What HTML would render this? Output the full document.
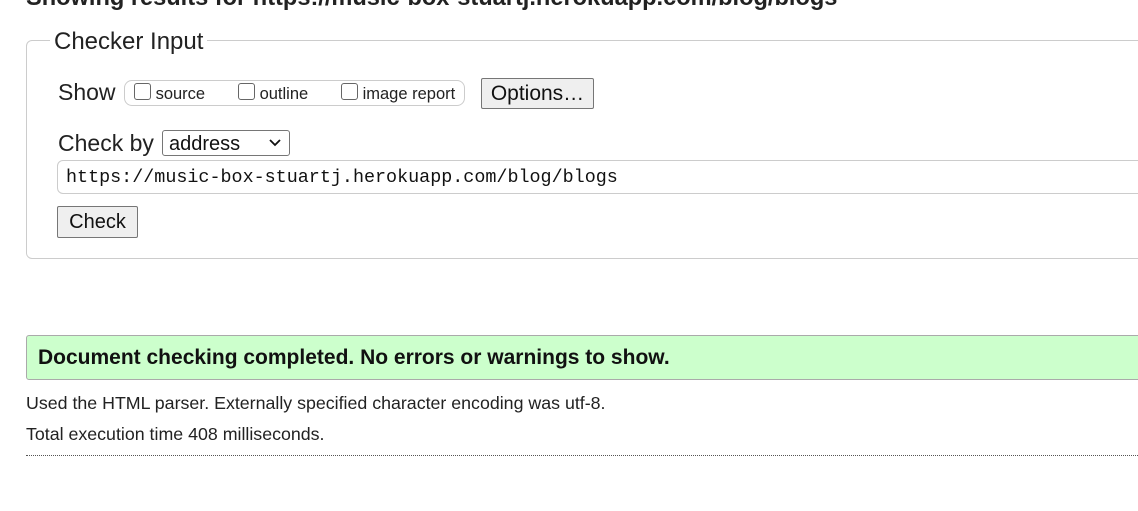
<!DOCTYPE html>
<html><head><style>
body{margin:0;width:1138px;height:511px;overflow:hidden;background:#fff;font-family:"Liberation Sans",Arial,sans-serif;color:#222;position:relative}
.a{position:absolute;white-space:nowrap}
.cb{display:inline-block;width:15px;height:15px;border:1px solid #666;border-radius:3px;vertical-align:-1px;background:#fff}
.btn{position:absolute;background:#efefef;border:1px solid #767676;border-radius:2px;box-sizing:border-box;font-size:20px;color:#111;text-align:center}
</style></head><body>
<div class="a" style="left:26px;top:-15px;font-size:23.6px;font-weight:bold;color:#222">Showing results for https://music-box-stuartj.herokuapp.com/blog/blogs</div>
<div class="a" style="left:26px;top:40px;width:1130px;height:219px;border:1px solid #ccc;border-radius:6px;box-sizing:border-box"></div>
<div class="a" style="left:50px;top:28px;background:#fff;padding:0 4px;font-size:24px;color:#222">Checker Input</div>
<div class="a" style="left:58px;top:79px;font-size:23px">Show</div>
<div class="a" style="left:124px;top:80px;width:341px;height:26px;border:1px solid #ccc;border-radius:8px;box-sizing:border-box"></div>
<div class="a" style="left:134px;top:83px;font-size:16.5px"><span class="cb"></span> source</div>
<div class="a" style="left:238px;top:83px;font-size:16.5px"><span class="cb"></span> outline</div>
<div class="a" style="left:341px;top:83px;font-size:16.5px"><span class="cb"></span> image report</div>
<div class="btn" style="left:481px;top:78px;width:113px;height:31px;line-height:29px;font-size:21px">Options…</div>
<div class="a" style="left:58px;top:130px;font-size:23px">Check by</div>
<div class="a" style="left:162px;top:130px;width:128px;height:26px;border:1px solid #767676;border-radius:3px;box-sizing:border-box;font-size:20px;line-height:26px;padding-left:6px;color:#111">address<svg style="position:absolute;right:8px;top:8px" width="12" height="8" viewBox="0 0 12 8"><path d="M1 1l5 5 5-5" stroke="#111" stroke-width="1.8" fill="none"/></svg></div>
<div class="a" style="left:57px;top:160px;width:1100px;height:34px;border:1px solid #ccc;border-radius:6px;box-sizing:border-box"></div>
<div class="a" style="left:66px;top:167px;font-family:'Liberation Mono',monospace;font-size:18.4px;color:#111">https://music-box-stuartj.herokuapp.com/blog/blogs</div>
<div class="btn" style="left:57px;top:206px;width:81px;height:32px;line-height:30px">Check</div>
<div class="a" style="left:26px;top:335px;width:1130px;height:45px;background:#ccffcc;border:1px solid #aaa;border-radius:3px;box-sizing:border-box"></div>
<div class="a" style="left:38px;top:346px;font-size:21px;font-weight:bold;color:#111">Document checking completed. No errors or warnings to show.</div>
<div class="a" style="left:26px;top:393px;font-size:17.8px">Used the HTML parser. Externally specified character encoding was utf-8.</div>
<div class="a" style="left:26px;top:424px;font-size:17.8px">Total execution time 408 milliseconds.</div>
<div class="a" style="left:26px;top:455px;width:1112px;border-top:1px dotted #555"></div>
</body></html>
